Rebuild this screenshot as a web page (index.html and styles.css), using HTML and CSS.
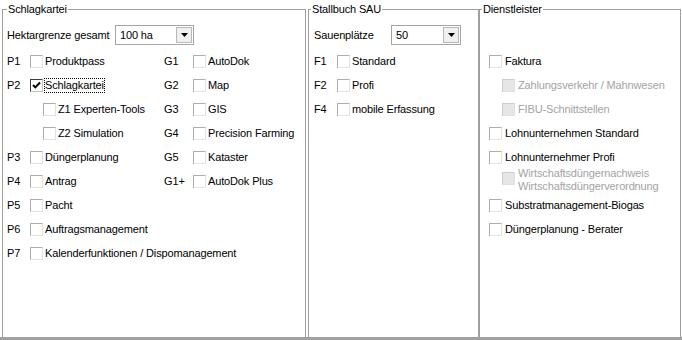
FILE: index.html
```html
<!DOCTYPE html>
<html lang="de">
<head>
    <meta charset="UTF-8">
    <title>Module</title>
    <link rel="stylesheet" href="styles.css">
</head>
<body>

    <div class="panels">

        <fieldset class="group group-main">
            <legend>Schlagkartei</legend>
            <div class="group-body">
                <div class="field-row">
                    <span class="field-label">Hektargrenze gesamt</span>
                    <div class="combo combo-ha">
                        <span class="combo-value">100 ha</span>
                        <span class="combo-btn"><svg width="7" height="4" viewBox="0 0 7 4"><path d="M0 0h7L3.5 4z"/></svg></span>
                    </div>
                </div>

                <div class="module-grid">
                    <span class="code code-p">P1</span>
                    <label class="check check-p"><span class="box"></span><span class="text">Produktpass</span></label>
                    <span class="code code-g">G1</span>
                    <label class="check check-g"><span class="box"></span><span class="text">AutoDok</span></label>

                    <span class="code code-p">P2</span>
                    <label class="check check-p"><span class="box checked"><svg width="11" height="11" viewBox="0 0 11 11"><path d="M2 5l2.3 2.4L9 2.5" fill="none" stroke="#000" stroke-width="1.9"/></svg></span><span class="text focused">Schlagkartei</span></label>
                    <span class="code code-g">G2</span>
                    <label class="check check-g"><span class="box"></span><span class="text">Map</span></label>

                    <label class="check check-p sub"><span class="box"></span><span class="text">Z1 Experten-Tools</span></label>
                    <span class="code code-g">G3</span>
                    <label class="check check-g"><span class="box"></span><span class="text">GIS</span></label>

                    <label class="check check-p sub"><span class="box"></span><span class="text">Z2 Simulation</span></label>
                    <span class="code code-g">G4</span>
                    <label class="check check-g"><span class="box"></span><span class="text">Precision Farming</span></label>

                    <span class="code code-p">P3</span>
                    <label class="check check-p"><span class="box"></span><span class="text">Düngerplanung</span></label>
                    <span class="code code-g">G5</span>
                    <label class="check check-g"><span class="box"></span><span class="text">Kataster</span></label>

                    <span class="code code-p">P4</span>
                    <label class="check check-p"><span class="box"></span><span class="text">Antrag</span></label>
                    <span class="code code-g">G1+</span>
                    <label class="check check-g"><span class="box"></span><span class="text">AutoDok Plus</span></label>

                    <span class="code code-p">P5</span>
                    <label class="check check-p"><span class="box"></span><span class="text">Pacht</span></label>

                    <span class="code code-p">P6</span>
                    <label class="check check-p"><span class="box"></span><span class="text">Auftragsmanagement</span></label>

                    <span class="code code-p">P7</span>
                    <label class="check check-p wide"><span class="box"></span><span class="text">Kalenderfunktionen / Dispomanagement</span></label>
                </div>
            </div>
        </fieldset>

        <fieldset class="group group-stall">
            <legend>Stallbuch SAU</legend>
            <div class="group-body">
                <div class="field-row">
                    <span class="field-label">Sauenplätze</span>
                    <div class="combo combo-sau">
                        <span class="combo-value">50</span>
                        <span class="combo-btn"><svg width="7" height="4" viewBox="0 0 7 4"><path d="M0 0h7L3.5 4z"/></svg></span>
                    </div>
                </div>

                <div class="stall-grid">
                    <span class="code">F1</span>
                    <label class="check"><span class="box"></span><span class="text">Standard</span></label>
                    <span class="code">F2</span>
                    <label class="check"><span class="box"></span><span class="text">Profi</span></label>
                    <span class="code">F4</span>
                    <label class="check"><span class="box"></span><span class="text">mobile Erfassung</span></label>
                </div>
            </div>
        </fieldset>

        <fieldset class="group group-service">
            <legend>Dienstleister</legend>
            <div class="group-body service-list">
                <label class="check"><span class="box"></span><span class="text">Faktura</span></label>
                <label class="check sub disabled"><span class="box"></span><span class="text">Zahlungsverkehr / Mahnwesen</span></label>
                <label class="check sub disabled"><span class="box"></span><span class="text">FIBU-Schnittstellen</span></label>
                <label class="check"><span class="box"></span><span class="text">Lohnunternehmen Standard</span></label>
                <label class="check"><span class="box"></span><span class="text">Lohnunternehmer Profi</span></label>
                <label class="check sub disabled two-line"><span class="box"></span><span class="text">Wirtschaftsdüngernachweis<br>Wirtschaftsdüngerverordnung</span></label>
                <label class="check"><span class="box"></span><span class="text">Substratmanagement-Biogas</span></label>
                <label class="check"><span class="box"></span><span class="text">Düngerplanung - Berater</span></label>
            </div>
        </fieldset>

    </div>

    <div class="bottom-line"></div>

</body>
</html>
```

FILE: styles.css
```css
* {
    box-sizing: border-box;
}
html, body {
    margin: 0;
    padding: 0;
}
body {
    width: 682px;
    height: 340px;
    overflow: hidden;
    background-color: #fff;
    color: #000;
    font-family: 'Liberation Sans', Arial, sans-serif;
    font-size: 11px;
    line-height: 13px;
    letter-spacing: -0.14px;
}
.panels {
    display: flex;
    height: 337px;
    padding: 3px 0 0 2px;
}
.group {
    margin: 0;
    padding: 0;
    min-width: 0;
    height: 334px;
    border: 1px solid #a0a0a0;
    border-bottom: none;
}
.group legend {
    padding: 0 1px;
    line-height: 13px;
}
.group-main {
    width: 304px;
}
.group-main legend {
    margin-left: 4px;
}
.group-stall {
    width: 171px;
    margin-left: 2px;
}
.group-stall legend,
.group-service legend {
    margin-left: 2px;
}
.group-service {
    width: 202px;
}
.group-body {
    padding-top: 9px;
}
.group-main .group-body {
    padding-left: 4px;
}
.group-stall .group-body {
    padding-left: 5px;
}
.bottom-line {
    height: 3px;
    background-color: #a0a0a0;
}

/* combo row */
.field-row {
    display: flex;
    align-items: center;
    height: 20px;
    margin-bottom: 4px;
}
.group-main .field-label {
    width: 108px;
}
.group-stall .field-label {
    width: 77px;
}
.combo {
    display: flex;
    height: 20px;
    border: 1px solid #a5a5a5;
    background-color: #fff;
}
.combo-ha {
    width: 79px;
}
.combo-sau {
    width: 70px;
}
.combo-value {
    flex: 1;
    padding-left: 4px;
    line-height: 18px;
}
.combo-btn {
    width: 16px;
    margin: 1px;
    border: 1px solid #b9b9b9;
    background-color: #f0f0f0;
    display: flex;
    align-items: center;
    justify-content: center;
}

/* checkboxes */
.check {
    display: flex;
    align-items: center;
    white-space: nowrap;
}
.box {
    flex: none;
    width: 13px;
    height: 13px;
    margin-right: 2px;
    border: 1px solid;
    border-color: #adadad #e2e2e2 #e2e2e2 #adadad;
    background-color: #fff;
}
.box.checked {
    border-color: #3c3c3c #c4c4c4 #c4c4c4 #3c3c3c;
}
.box svg {
    display: block;
}
.text.focused {
    outline: 1px dotted #000;
    outline-offset: 0;
}
.sub {
    margin-left: 13px;
}
.disabled {
    color: #a3a3a3;
}
.disabled .box {
    background-color: #e6e6e6;
    border-color: #cdcdcd #e0e0e0 #e0e0e0 #cdcdcd;
}

/* module grids */
.module-grid {
    display: grid;
    grid-template-columns: 23px 134px 29px 1fr;
    grid-auto-rows: 24px;
    align-items: center;
}
.code-p {
    grid-column: 1;
}
.check-p {
    grid-column: 2;
}
.check-p.wide {
    grid-column: 2 / span 3;
}
.code-g {
    grid-column: 3;
}
.check-g {
    grid-column: 4;
}
.stall-grid {
    display: grid;
    grid-template-columns: 23px 1fr;
    grid-auto-rows: 24px;
    align-items: center;
}

/* service list */
.service-list {
    padding: 33px 0 0 9px;
}
.service-list .check {
    height: 24px;
}
.service-list .box {
    margin-right: 3px;
}
.service-list .two-line {
    align-items: flex-start;
}
.two-line .text {
    margin-top: -2px;
}
.two-line .box {
    margin-top: 3px;
}
```
